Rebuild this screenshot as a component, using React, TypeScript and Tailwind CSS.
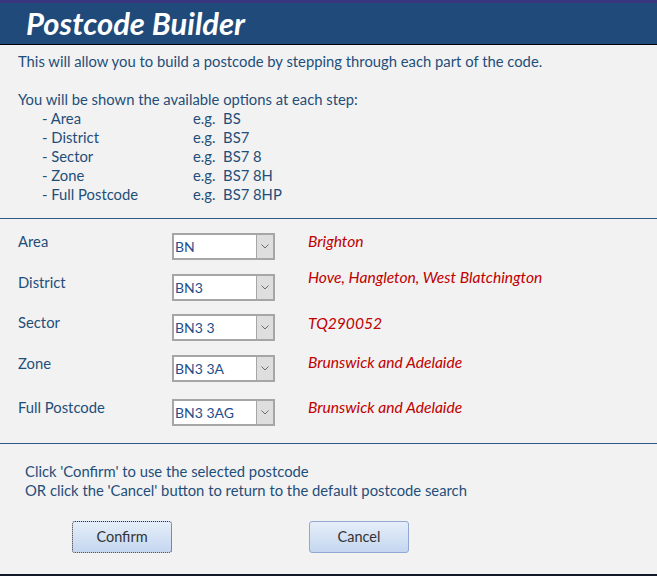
import React from "react";

const font = { fontFamily: "Lato, 'Open Sans', sans-serif" };

const parts = [
  ["- Area", "BS"],
  ["- District", "BS7"],
  ["- Sector", "BS7 8"],
  ["- Zone", "BS7 8H"],
  ["- Full Postcode", "BS7 8HP"],
];

const rows = [
  { label: "Area", value: "BN", note: "Brighton", mt: "mt-[14px]", noteCls: "-mt-px" },
  { label: "District", value: "BN3", note: "Hove, Hangleton, West Blatchington", mt: "mt-[14px]", noteCls: "-mt-[6px]" },
  { label: "Sector", value: "BN3 3", note: "TQ290052", mt: "mt-[13px]", noteCls: "" },
  { label: "Zone", value: "BN3 3A", note: "Brunswick and Adelaide", mt: "mt-[14px]", noteCls: "-mt-[2px]" },
  { label: "Full Postcode", value: "BN3 3AG", note: "Brunswick and Adelaide", mt: "mt-[17px]", noteCls: "-mt-px" },
];

function Combo({ value }: { value: string }) {
  return (
    <div className="flex h-[27px] w-[103px] border-2 border-[#a6a6a6] bg-white">
      <div className="flex-1 pl-px text-[14px] leading-[23px] text-[#1f4e8c]">{value}</div>
      <div className="flex w-[17px] items-center justify-center border-l border-[#a6a6a6] bg-[#dedede]">
        <svg width="8" height="5" viewBox="0 0 8 5" fill="none" stroke="#6b6b6b" strokeWidth="1">
          <path d="M0.5 0.5 L4 4 L7.5 0.5" />
        </svg>
      </div>
    </div>
  );
}

export default function App() {
  return (
    <div className="flex h-[576px] w-[657px] flex-col bg-[#f2f2f2] text-[14.8px] text-[#1f4e79]" style={font}>
      <div className="h-[45px] border-t-[3px] border-b border-t-[#38367f] border-b-black bg-[#1f4a7a] pl-[26px]">
        <h1 className="text-[31px] font-bold italic leading-[40px] text-white">Postcode Builder</h1>
      </div>

      <div className="pl-[18px] pt-[7px] pb-[14px] leading-[19px]">
        <p>This will allow you to build a postcode by stepping through each part of the code.</p>
        <p className="mt-[19px]">You will be shown the available options at each step:</p>
        {parts.map(([name, eg]) => (
          <div key={name} className="flex">
            <span className="w-[175px] pl-[24px]">{name}</span>
            <span>e.g.&nbsp;&nbsp;{eg}</span>
          </div>
        ))}
      </div>

      <div className="h-px bg-[#2e5a8a]" />

      <div className="pb-[17px] pl-[18px]">
        {rows.map((r) => (
          <div key={r.label} className={`flex items-start leading-[19px] ${r.mt}`}>
            <span className="-mt-px w-[154px]">{r.label}</span>
            <Combo value={r.value} />
            <span className={`ml-[33px] text-[15.6px] italic text-[#c00000] ${r.noteCls}`}>{r.note}</span>
          </div>
        ))}
      </div>

      <div className="h-px bg-[#2e5a8a]" />

      <div className="pl-[25px] pt-[18px] leading-[19px]">
        <p>Click 'Confirm' to use the selected postcode</p>
        <p>OR click the 'Cancel' button to return to the default postcode search</p>
      </div>

      <div className="mt-[21px] flex gap-[137px] pl-[72px]">
        <button className="h-[32px] w-[100px] rounded-[3px] border border-dotted border-[#333] bg-gradient-to-b from-[#e6eef9] to-[#c4d7f0] text-[14.5px] text-[#333]">
          Confirm
        </button>
        <button className="h-[32px] w-[100px] rounded-[3px] border border-[#8fa9d4] bg-gradient-to-b from-[#e6eef9] to-[#c4d7f0] text-[14.5px] text-[#333]">
          Cancel
        </button>
      </div>

      <div className="mt-auto h-[2px] bg-[#111a26]" />
    </div>
  );
}
